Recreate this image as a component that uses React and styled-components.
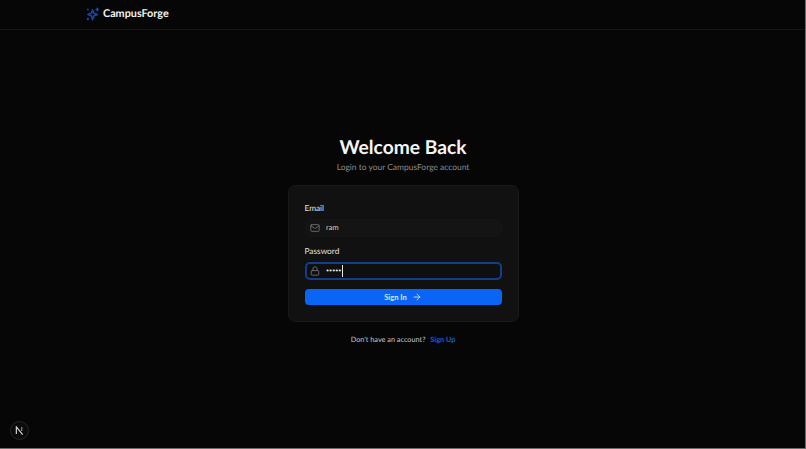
import { createGlobalStyle } from "styled-components";
import styled from "styled-components";

const GlobalStyle = createGlobalStyle`
  html, body {
    margin: 0;
    padding: 0;
    background: #060606;
  }

  * {
    box-sizing: border-box;
  }
`;

const Page = styled.div`
  position: relative;
  width: 806px;
  height: 449px;
  overflow: hidden;
  display: flex;
  flex-direction: column;
  background: #060606;
  border-right: 1px solid #6b6b6b;
  border-bottom: 1px solid #6b6b6b;
  font-family: "Lato", sans-serif;
  text-rendering: geometricPrecision;
  color: #f2f2f2;
`;

const Navbar = styled.header`
  height: 30px;
  flex: none;
  display: flex;
  align-items: center;
  gap: 3px;
  padding: 0 0 2px 86px;
  border-bottom: 1px solid #171717;
`;

const Brand = styled.span`
  font-size: 10.8px;
  font-weight: 700;
  color: #f2f2f2;
`;

const Main = styled.main`
  flex: 1;
  display: flex;
  flex-direction: column;
  align-items: center;
  padding: 105px 0 0 1px;
`;

const Title = styled.h1`
  margin: 0;
  font-size: 19.2px;
  line-height: 26px;
  font-weight: 700;
  color: #f5f5f5;
`;

const Subtitle = styled.p`
  margin: 0 0 11px;
  font-size: 8.45px;
  line-height: 13px;
  color: #8a8a8a;
`;

const Card = styled.form`
  width: 231px;
  height: 137px;
  display: flex;
  flex-direction: column;
  padding: 16px 16px 0;
  background: #111111;
  border: 1px solid #191919;
  border-radius: 7px;
`;

const Label = styled.label`
  display: block;
  height: 14px;
  margin-bottom: 3px;
  font-size: 8.3px;
  line-height: 12px;
  font-weight: 400;
  color: #e2e2e2;
`;

const Field = styled.div`
  height: 18px;
  width: 197px;
  display: flex;
  align-items: center;
  gap: 6px;
  padding-left: ${(p) => (p.$focused ? 3.5 : 4.5)}px;
  margin-bottom: ${(p) => (p.$focused ? 9 : 8)}px;
  background: ${(p) => (p.$focused ? "#0f0f0f" : "#141414")};
  border-radius: 5px;
  border: ${(p) => (p.$focused ? "2px solid #113f8a" : "1px solid #151515")};
  color: #767676;
`;

const Value = styled.span`
  font-size: 7.5px;
  line-height: 12px;
  color: #cfcfcf;
`;

const Dots = styled.span`
  font-size: 5.3px;
  letter-spacing: 0;
  line-height: 12px;
  color: #e8e8e8;
  padding-right: 1px;
  border-right: 1px solid #e8e8e8;
`;

const SubmitButton = styled.button`
  width: 197px;
  height: 16px;
  border: none;
  outline: none;
  padding: 0;
  border-radius: 4px;
  background: #0a64f5;
  color: #d8e6ff;
  display: flex;
  align-items: center;
  justify-content: center;
  gap: 5px;
  font-family: inherit;
  font-size: 7.6px;
  font-weight: 700;
`;

const Footer = styled.p`
  margin: 11px 0 0;
  font-size: 7.3px;
  line-height: 14px;
  color: #c6c6c6;
`;

const SignUp = styled.a`
  margin-left: 3px;
  color: #155ed6;
  font-weight: 700;
`;

const DevBadge = styled.div`
  position: absolute;
  left: 10px;
  bottom: 8px;
  width: 19px;
  height: 19px;
  border-radius: 50%;
  background: #0b0b0b;
  border: 1px solid #262626;
  display: flex;
  align-items: center;
  justify-content: center;
`;

const Sparkles = () => (
  <svg width="14" height="14" viewBox="0 0 14 14" fill="none" stroke="#1347a8" strokeWidth="1.7" strokeLinejoin="round">
    <path d="M6.6 3 8 6.2 11.4 7.5 8 8.8 6.6 12.4 5.2 8.8 2 7.5 5.2 6.2Z" />
    <path d="M11.2 0.8v3.4M9.5 2.5h3.4" />
    <circle cx="1.9" cy="2.6" r="1" fill="#1347a8" stroke="none" />
    <circle cx="1.9" cy="12" r="1.2" fill="#1347a8" stroke="none" />
  </svg>
);

const MailIcon = () => (
  <svg width="10" height="10" viewBox="0 0 24 24" fill="none" stroke="currentColor" strokeWidth="2" strokeLinecap="round" strokeLinejoin="round">
    <rect x="2" y="4" width="20" height="16" rx="2" />
    <path d="m22 7-8.97 5.7a1.94 1.94 0 0 1-2.06 0L2 7" />
  </svg>
);

const LockIcon = () => (
  <svg width="10" height="10" viewBox="0 0 24 24" fill="none" stroke="currentColor" strokeWidth="2" strokeLinecap="round" strokeLinejoin="round">
    <rect x="3" y="11" width="18" height="11" rx="2" />
    <path d="M7 11V7a5 5 0 0 1 10 0v4" />
  </svg>
);

const ArrowIcon = () => (
  <svg width="10" height="10" viewBox="0 0 24 24" fill="none" stroke="currentColor" strokeWidth="2" strokeLinecap="round" strokeLinejoin="round">
    <path d="M5 12h14" />
    <path d="m12 5 7 7-7 7" />
  </svg>
);

const NextMark = () => (
  <svg width="9" height="9" viewBox="0 0 10 10" fill="none">
    <path d="M1.5 9V1L8.5 9.5" stroke="#d6d6d6" strokeWidth="1.3" />
    <path d="M7.5 1v4.5" stroke="#9a9a9a" strokeWidth="1.2" />
  </svg>
);

const App = () => {
  return (
    <Page>
      <GlobalStyle />
      <Navbar>
        <Sparkles />
        <Brand>CampusForge</Brand>
      </Navbar>
      <Main>
        <Title>Welcome Back</Title>
        <Subtitle>Login to your CampusForge account</Subtitle>
        <Card>
          <Label>Email</Label>
          <Field>
            <MailIcon />
            <Value>ram</Value>
          </Field>
          <Label>Password</Label>
          <Field $focused>
            <LockIcon />
            <Dots>•••••</Dots>
          </Field>
          <SubmitButton type="button">
            Sign In
            <ArrowIcon />
          </SubmitButton>
        </Card>
        <Footer>
          Don't have an account? <SignUp>Sign Up</SignUp>
        </Footer>
      </Main>
      <DevBadge>
        <NextMark />
      </DevBadge>
    </Page>
  );
};

export default App;
